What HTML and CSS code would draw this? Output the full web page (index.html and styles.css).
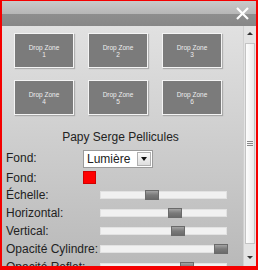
FILE: index.html
```html
<!DOCTYPE html>
<html lang="fr">
<head>
  <meta charset="UTF-8">
  <title>Papy Serge Pellicules</title>
  <link rel="stylesheet" href="styles.css">
</head>
<body>

  <div class="window">
    <div class="titlebar">
      <svg class="close" width="13" height="13" viewBox="0 0 13 13">
        <path d="M1 1 L12 12 M12 1 L1 12" stroke="#fff" stroke-width="2.2"/>
      </svg>
    </div>

    <div class="main">
      <div class="content">

        <div class="zones">
          <div class="zone">Drop Zone<br>1</div>
          <div class="zone">Drop Zone<br>2</div>
          <div class="zone">Drop Zone<br>3</div>
          <div class="zone">Drop Zone<br>4</div>
          <div class="zone">Drop Zone<br>5</div>
          <div class="zone">Drop Zone<br>6</div>
        </div>

        <div class="title">Papy Serge Pellicules</div>

        <div class="row row-select">
          <span class="label">Fond:</span>
          <div class="select">
            <span class="select-text">Lumière</span>
            <span class="select-btn"><span class="arrow"></span></span>
          </div>
        </div>

        <div class="row row-color">
          <span class="label">Fond:</span>
          <span class="swatch"></span>
        </div>

        <div class="row">
          <span class="label">Échelle:</span>
          <div class="track"><span class="thumb" style="left: 44px"></span></div>
        </div>
        <div class="row">
          <span class="label">Horizontal:</span>
          <div class="track"><span class="thumb" style="left: 67px"></span></div>
        </div>
        <div class="row">
          <span class="label">Vertical:</span>
          <div class="track"><span class="thumb" style="left: 70px"></span></div>
        </div>
        <div class="row">
          <span class="label">Opacité Cylindre:</span>
          <div class="track"><span class="thumb" style="left: 113px"></span></div>
        </div>
        <div class="row">
          <span class="label">Opacité Reflet:</span>
          <div class="track"><span class="thumb" style="left: 79px"></span></div>
        </div>

      </div>

      <div class="scrollbar">
        <span class="arrow-up"></span>
        <div class="scroll-thumb"><span class="grip"></span></div>
        <span class="arrow-down"></span>
      </div>
    </div>
  </div>

</body>
</html>
```

FILE: styles.css
```css
body {
  margin: 0;
  font-family: "Liberation Sans", Arial, sans-serif;
}

.window {
  width: 258px;
  height: 270px;
  box-sizing: border-box;
  border: solid #f40000;
  border-width: 1px 2px 4px 2px;
  overflow: hidden;
  display: flex;
  flex-direction: column;
}

.titlebar {
  height: 25px;
  flex-shrink: 0;
  background: linear-gradient(to bottom, #c9c9c9 0%, #b7b7b7 50%, #8e8e8e 52%, #878787 100%);
  display: flex;
  justify-content: flex-end;
  align-items: flex-start;
}

.close {
  margin: 6px 7px 0 0;
}

.main {
  flex: 1;
  display: flex;
  min-height: 0;
}

.content {
  flex: 1;
  padding: 7px 0 0 4px;
  background: linear-gradient(to bottom, #e1e1e1 0%, #cdcdcd 50%, #b9b9b9 100%);
  overflow: hidden;
}

.zones {
  display: grid;
  grid-template-columns: repeat(3, 60px);
  grid-auto-rows: 35px;
  column-gap: 14px;
  row-gap: 12px;
  margin-left: 8px;
}

.zone {
  background: #7b7b7b;
  border: 1px solid #f4f4f4;
  box-shadow: 1px 1px 1px rgba(0, 0, 0, 0.2);
  color: #eee;
  font-size: 6.5px;
  line-height: 7px;
  text-align: center;
  display: flex;
  align-items: center;
  justify-content: center;
}

.title {
  margin-top: 14px;
  padding-right: 8px;
  text-align: center;
  font-size: 12px;
  line-height: 16px;
  color: #222;
}

.row {
  display: flex;
  align-items: center;
  height: 18px;
  font-size: 12px;
  color: #222;
}

.label {
  width: 94px;
  flex-shrink: 0;
  line-height: 16px;
}

.row-select {
  margin-top: 5px;
  height: 19px;
  align-items: flex-start;
}

.row-select .label,
.row-color .label {
  width: 77px;
}

.row-color {
  height: 17px;
}

.select {
  width: 70px;
  height: 18px;
  box-sizing: border-box;
  background: #fff;
  border: 1px solid #9a9a9a;
  display: flex;
  align-items: center;
  justify-content: space-between;
  padding-left: 3px;
}

.select-text {
  font-size: 12px;
}

.select-btn {
  width: 14px;
  height: 14px;
  margin-right: 1px;
  background: linear-gradient(#fbfbfb, #dedede);
  border: 1px solid #b0b0b0;
  box-sizing: border-box;
  display: flex;
  align-items: center;
  justify-content: center;
}

.arrow {
  border-left: 3px solid transparent;
  border-right: 3px solid transparent;
  border-top: 4px solid #111;
}

.swatch {
  width: 13px;
  height: 13px;
  background: #ff0000;
  box-shadow: inset 0 0 0 1px #d00000;
}

.track {
  position: relative;
  width: 127px;
  height: 8px;
  background: #f1f1f1;
  border: 1px solid #e2e2e2;
  box-sizing: border-box;
}

.thumb {
  position: absolute;
  top: -2px;
  width: 14px;
  height: 10px;
  box-sizing: border-box;
  border: 1px solid #6a6a6a;
  background: linear-gradient(#a3a3a3, #7a7a7a 50%, #6b6b6b);
}

.scrollbar {
  width: 12px;
  flex-shrink: 0;
  background: #e4e4e4;
  border-left: 1px solid #d0d0d0;
  display: flex;
  flex-direction: column;
  align-items: center;
}

.arrow-up,
.arrow-down {
  border-left: 3px solid transparent;
  border-right: 3px solid transparent;
  height: 0;
}

.arrow-up {
  margin-top: 6px;
  border-bottom: 3px solid #333;
}

.arrow-down {
  margin-top: 12px;
  border-top: 3px solid #333;
}

.scroll-thumb {
  margin-top: 8px;
  width: 10px;
  height: 201px;
  box-sizing: border-box;
  border: 1px solid #c4c4c4;
  background: linear-gradient(to right, #fdfdfd, #ececec);
  display: flex;
  align-items: center;
  justify-content: center;
}

.grip {
  width: 6px;
  height: 5px;
  border-top: 1px solid #888;
  border-bottom: 1px solid #888;
  box-sizing: border-box;
  background: linear-gradient(#888, #888) center / 6px 1px no-repeat;
}
```
